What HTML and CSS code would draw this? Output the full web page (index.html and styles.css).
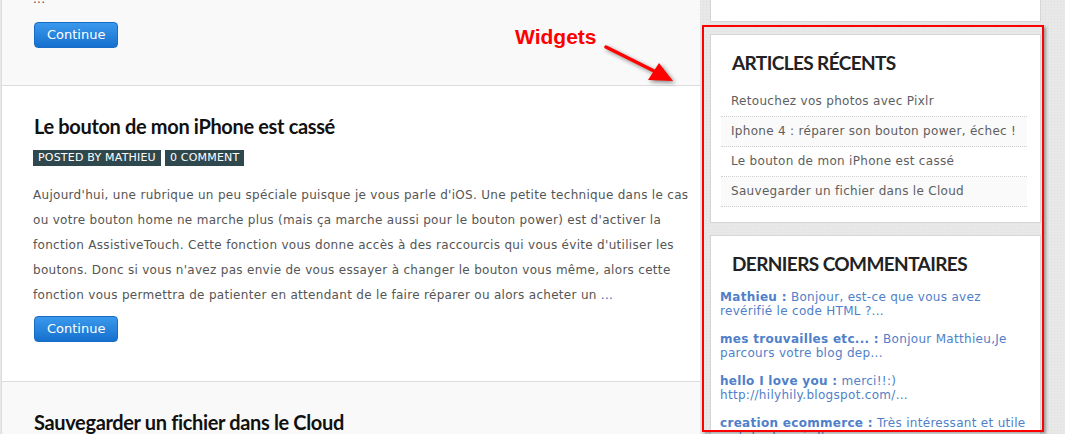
FILE: index.html
```html
<!DOCTYPE html>
<html lang="fr">
<head>
    <meta charset="UTF-8">
    <meta name="viewport" content="width=device-width, initial-scale=1.0">
    <title>Blog - Widgets</title>
    <link rel="stylesheet" href="styles.css">
</head>
<body>
    <div class="page">
        <div class="main">
            <div class="post post-tail">
                <p class="excerpt first-line">...</p>
                <a class="continue" href="#">Continue</a>
            </div>
            <div class="post white">
                <h2>Le bouton de mon iPhone est cassé</h2>
                <div class="meta">
                    <span>Posted by Mathieu</span>
                    <span>0 comment</span>
                </div>
                <p class="excerpt">Aujourd'hui, une rubrique un peu spéciale puisque je vous parle d'iOS. Une petite technique dans le cas<br>ou votre bouton home ne marche plus (mais ça marche aussi pour le bouton power) est d'activer la<br>fonction AssistiveTouch. Cette fonction vous donne accès à des raccourcis qui vous évite d'utiliser les<br>boutons. Donc si vous n'avez pas envie de vous essayer à changer le bouton vous même, alors cette<br>fonction vous permettra de patienter en attendant de le faire réparer ou alors acheter un <a href="#">...</a></p>
                <a class="continue" href="#">Continue</a>
            </div>
            <div class="post">
                <h2>Sauvegarder un fichier dans le Cloud</h2>
            </div>
        </div>
        <div class="sidebar">
            <div class="widget widget-tail"></div>
            <div class="widget">
                <h3>Articles récents</h3>
                <ul class="recent">
                    <li><a href="#">Retouchez vos photos avec Pixlr</a></li>
                    <li><a href="#">Iphone 4 : réparer son bouton power, échec !</a></li>
                    <li><a href="#">Le bouton de mon iPhone est cassé</a></li>
                    <li><a href="#">Sauvegarder un fichier dans le Cloud</a></li>
                </ul>
            </div>
            <div class="widget">
                <h3>Derniers commentaires</h3>
                <div class="comments">
                    <p><b>Mathieu :</b> Bonjour, est-ce que vous avez<br>revérifié le code HTML ?...</p>
                    <p><b>mes trouvailles etc... :</b> Bonjour Matthieu,Je<br>parcours votre blog dep...</p>
                    <p><b>hello I love you :</b> merci!!:)<br>http://hilyhily.blogspot.com/...</p>
                    <p><b>creation ecommerce :</b> Très intéressant et utile<br>ce tuto. Je vais l'essayer ce</p>
                </div>
            </div>
        </div>
    </div>

    <!-- annotation drawn over the screenshot -->
    <div class="note-label">Widgets</div>
    <svg class="note-arrow" width="90" height="50" viewBox="0 0 90 50">
        <line x1="6" y1="5" x2="60" y2="32" stroke="#ff0000" stroke-width="3.5" stroke-linecap="round"/>
        <polygon points="73,39 48,38 59,21" fill="#ff0000"/>
    </svg>
    <div class="note-box"></div>
</body>
</html>
```

FILE: styles.css
```css
body {
    margin: 0;
    padding: 0;
    height: 434px;
    overflow: hidden;
    background-color: #e8e8e8;
    background-image: radial-gradient(rgba(0, 0, 0, 0.04) 1px, transparent 1px);
    background-size: 3px 3px;
    font-family: 'DejaVu Sans', Verdana, sans-serif;
    font-size: 12px;
    letter-spacing: 0.3px;
    position: relative;
}
a {
    text-decoration: none;
}
.page {
    display: flex;
    align-items: flex-start;
}
.main {
    width: 698px;
    margin-left: 1px;
    border-left: 1px solid #dcdcdc;
    background: #f9f9f9;
}
.post {
    padding: 28px 4px 39px 32px;
    border-bottom: 1px solid #dcdcdc;
    background: #f9f9f9;
}
.post.white {
    background: #fff;
}
.post-tail {
    padding-top: 0;
    padding-bottom: 37px;
}
.post h2 {
    font-family: 'Lato', sans-serif;
    font-size: 20px;
    line-height: 24px;
    letter-spacing: -0.35px;
    color: #111;
    margin: 0 0 12px;
}
.meta {
    display: flex;
    gap: 4px;
    margin-left: -1px;
}
.meta span {
    background: #2f484d;
    color: #fff;
    font-size: 11px;
    line-height: 16px;
    letter-spacing: 0.2px;
    padding: 0 5px;
    text-transform: uppercase;
}
.excerpt {
    color: #555;
    line-height: 25px;
    margin: 17px 0 8px;
    margin-left: -1px;
    white-space: nowrap;
}
.excerpt a {
    color: #3a6fbf;
}
.first-line {
    margin-top: -13px;
    margin-bottom: 10px;
}
.continue {
    display: inline-block;
    height: 24px;
    line-height: 24px;
    padding: 0 12px;
    border: 1px solid #1a6bc4;
    border-radius: 4px;
    background: linear-gradient(#3b99ec, #1570ce);
    color: #fff;
    font-size: 13px;
    letter-spacing: 0;
}
.sidebar {
    padding-left: 10px;
}
.widget {
    width: 331px;
    box-sizing: border-box;
    background: #fff;
    border: 1px solid #d6d6d6;
    margin-bottom: 12px;
    padding: 0 13px 15px 10px;
}
.widget-tail {
    height: 22px;
    border-top: none;
    padding: 0;
}
.widget h3 {
    font-family: 'Lato', sans-serif;
    font-size: 19px;
    line-height: 24px;
    letter-spacing: -0.6px;
    color: #222;
    text-transform: uppercase;
    margin: 16px 0 12px 11px;
}
.recent {
    list-style: none;
    margin: 0;
    padding: 0;
}
.recent li {
    line-height: 29px;
    border-bottom: 1px dotted #cfcfcf;
    padding-left: 10px;
}
.recent li:nth-child(even) {
    background: #fafafa;
}
.recent a {
    color: #5e5e5e;
}
.comments {
    margin-left: -1px;
    padding-top: 2px;
}
.comments p {
    color: #4f80c9;
    line-height: 14px;
    margin: 0 0 14px;
}
.note-label {
    position: absolute;
    left: 515px;
    top: 25px;
    font-family: 'Liberation Sans', Arial, sans-serif;
    font-weight: bold;
    font-size: 21px;
    letter-spacing: 0;
    color: #ff0000;
}
.note-arrow {
    position: absolute;
    left: 600px;
    top: 42px;
    filter: drop-shadow(2px 2px 2px rgba(0, 0, 0, 0.45));
}
.note-box {
    position: absolute;
    left: 702px;
    top: 25px;
    width: 338px;
    height: 403px;
    border: 2px solid #ff0000;
    box-shadow: 2px 2px 3px rgba(0, 0, 0, 0.35);
}
```
